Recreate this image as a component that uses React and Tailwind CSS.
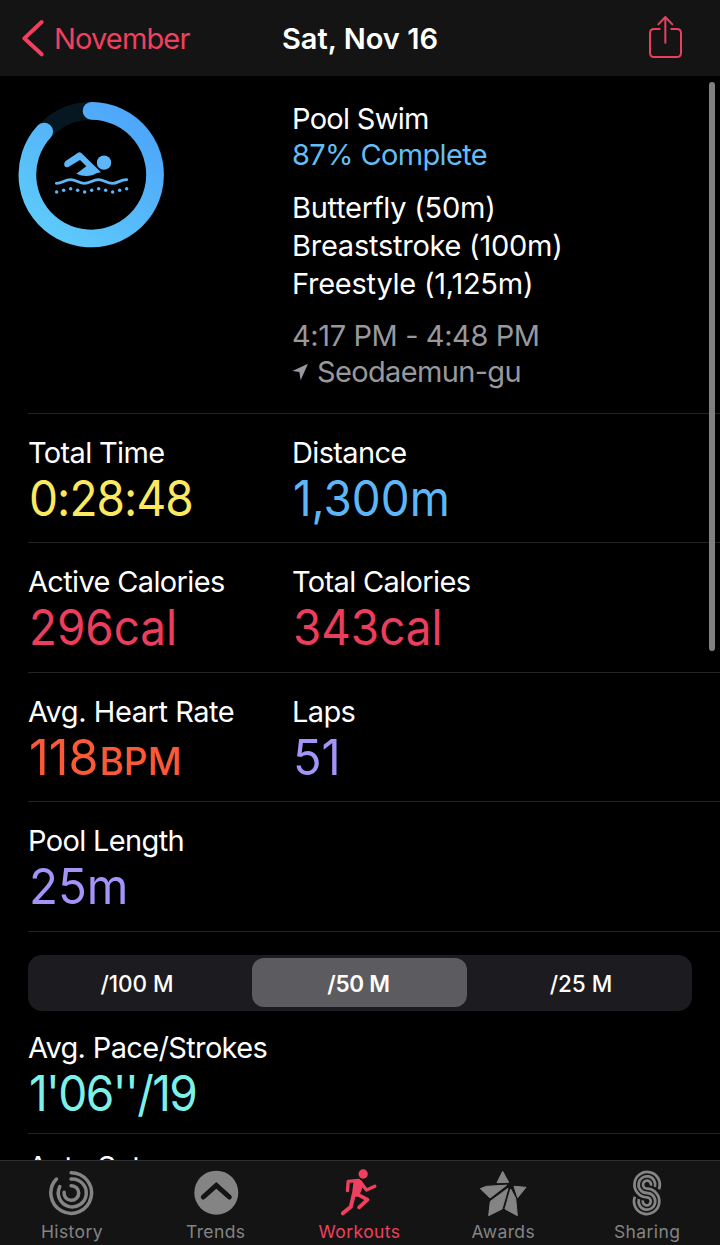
import React from "react";

function Stat({ label, value, color, labelClass = "tracking-[-0.65px]", valueClass = "scale-x-[0.935]" }) {
  return (
    <div className="whitespace-nowrap">
      <div className={`text-[29px] leading-[38px] text-white ${labelClass}`}>{label}</div>
      <div className={`w-fit origin-left pt-px pl-px text-[49px] leading-[52px] ${color} ${valueClass}`}>{value}</div>
    </div>
  );
}

function Row({ children }) {
  return (
    <div className="ml-7 grid h-[129.4px] shrink-0 grid-cols-[264px_1fr] border-b border-[#242426] pt-[20px]">
      {children}
    </div>
  );
}

function Header() {
  return (
    <header className="grid h-[76px] shrink-0 grid-cols-[1fr_auto_1fr] items-center bg-[#141414] text-[29px] leading-[38px]">
      <div className="flex items-center pl-[20px] text-[#f0405f]">
        <svg className="h-[40px] w-[26px]" viewBox="60 55 78 120" fill="none" stroke="#f0405f" strokeWidth="12" strokeLinecap="round" strokeLinejoin="round">
          <path d="M125 67 L73 116 L125 164" />
        </svg>
        <span className="pt-[2px] pl-[8px] tracking-[-0.85px]">November</span>
      </div>
      <h1 className="pt-px font-semibold text-white">Sat, Nov 16</h1>
      <div className="flex justify-end pr-[37px]">
        <svg className="h-[48px] w-[36px]" viewBox="861 42 108 144" fill="none" stroke="#e8405f" strokeWidth="6" strokeLinecap="round" strokeLinejoin="round">
          <path d="M899 87 H883 Q870 87 870 100 V158 Q870 171 883 171 H950 Q963 171 963 158 V100 Q963 87 950 87 H934" />
          <path d="M916 128 V52 M895 73 L916 51 L937 73" />
        </svg>
      </div>
    </header>
  );
}

function SwimRing() {
  const dots = [577, 572, 567, 572, 577, 572, 567, 572, 577, 572, 567];
  return (
    <svg className="h-[147px] w-[147px]" viewBox="54 304 441 441" fill="none">
      <defs>
        <linearGradient id="ring" gradientUnits="userSpaceOnUse" x1="110" y1="690" x2="390" y2="340">
          <stop offset="0" stopColor="#5ecbfa" />
          <stop offset="1" stopColor="#4ea6fa" />
        </linearGradient>
      </defs>
      <circle cx="274.5" cy="525" r="191.5" stroke="#071722" strokeWidth="53" />
      <path d="M274.5 333.5 A191.5 191.5 0 1 1 132.5 395.5" stroke="url(#ring)" strokeWidth="53" strokeLinecap="round" />
      <g fill="#5db6f7">
        <path d="M234 459 Q239 456 244 460 L303 518 Q291 519 279 526 Q253 534 229 522 L259 500 L240 481 L205 502 Q198 505 193 498 Q190 490 197 484 Z" />
        <circle cx="312" cy="489" r="21.5" />
        {dots.map((y, i) => (
          <circle key={i} cx={170 + i * 21} cy={y} r="5.2" />
        ))}
      </g>
      <path d="M169 551 C188 551 193 540 211 540 S236 551 253 551 S278 540 295 540 S320 551 337 551 S360 540 380 540" stroke="#5db6f7" strokeWidth="8.5" strokeLinecap="round" />
    </svg>
  );
}

function Tab({ label, viewBox, active, children }) {
  return (
    <div className={`flex flex-col items-center ${active ? "text-[#f0405f]" : "text-[#848484]"}`}>
      <svg className="h-[48px] w-[48px]" viewBox={viewBox} fill="none">
        {children}
      </svg>
      <span className="mt-[3px] text-[17.5px] leading-[24px] tracking-[0.4px]">{label}</span>
    </div>
  );
}

function TabBar() {
  return (
    <nav className="grid h-[85px] shrink-0 grid-cols-5 border-t border-[#2f2f2f] bg-[#141414] pr-px pt-[8px]">
      <Tab label="History" viewBox="143.7 117 144 144">
        <g stroke="#848484" strokeWidth="10.5" strokeLinecap="round">
          <path d="M213 128 A61 61 0 1 1 169 147" />
          <path d="M213 147 A42 42 0 1 1 179 170" />
          <path d="M213 167 A22 22 0 1 1 192 187" />
        </g>
      </Tab>
      <Tab label="Trends" viewBox="575.1 117 144 144">
        <circle cx="648" cy="188" r="66" fill="#848484" />
        <path d="M609 201 L648 166 L687 201" stroke="#141414" strokeWidth="15" strokeLinecap="round" />
      </Tab>
      <Tab label="Workouts" viewBox="226.5 117 144 144" active>
        <circle cx="311" cy="132" r="14" fill="#f0405f" />
        <g stroke="#f0405f" strokeLinecap="round" strokeLinejoin="round">
          <path d="M264 182 L266 154 L298 151" strokeWidth="10" />
          <path d="M302 155 L321 180 L346 169" strokeWidth="10" />
          <path d="M288 190 L324 209 L299 232" strokeWidth="11.5" />
          <path d="M283 192 L274 230 L250 250" strokeWidth="12" />
          <path d="M285 152 L303 153 L310 163 L297 196 L279 200 Z" strokeWidth="5" fill="#f0405f" />
        </g>
      </Tab>
      <Tab label="Awards" viewBox="58 117 144 144">
        <g fill="#848484" stroke="#848484" strokeWidth="3" strokeLinejoin="round">
          <path d="M129 124 L147 157 L112 158 Z" />
          <path d="M62 176 L80 169 L141 165.5 L91 204 Z" />
          <path d="M145 175 L127 237 L87 257 L92 214 Z" />
          <path d="M163 169 L199 172 L174 203 Z" />
          <path d="M153 177 L168 205 L173 257 L136 237 Z" />
        </g>
      </Tab>
      <Tab label="Sharing" viewBox="489.3 117 144 144">
        <g stroke="#848484" strokeWidth="8.3">
          <path d="M597 178 A38 38 0 1 0 561 202 A12 12 0 1 1 549 211" />
          <path d="M585 171 A25 25 0 1 0 561 189 A25 25 0 1 1 537 207" />
          <path d="M573 167 A12 12 0 1 0 561 176 A38 38 0 1 1 525 200" />
        </g>
      </Tab>
    </nav>
  );
}

export default function App() {
  return (
    <div className="relative flex h-[1245px] w-[720px] flex-col overflow-hidden bg-black font-[Inter,sans-serif]">
      <Header />
      <main className="flex min-h-0 flex-1 flex-col overflow-hidden">
        <section className="grid h-[337px] shrink-0 grid-cols-[274px_1fr] pl-[18px] pt-[25px]">
          <SwimRing />
          <div className="whitespace-nowrap text-[29px] text-white">
            <div className="leading-[36px] tracking-[-0.7px]">Pool Swim</div>
            <div className="leading-[36px] tracking-[-0.65px] text-[#64bdf5]">87% Complete</div>
            <div className="mt-[15.5px] leading-[38.3px] tracking-[-0.25px]">
              <div>Butterfly (50m)</div>
              <div>Breaststroke (100m)</div>
              <div>Freestyle (1,125m)</div>
            </div>
            <div className="mt-[15px] leading-[36px] tracking-[-0.4px] text-[#98989e]">4:17 PM - 4:48 PM</div>
            <div className="flex items-center leading-[36px] tracking-[-0.65px] text-[#98989e]">
              <svg className="h-[18px] w-[18px]" viewBox="38 552 54 54" fill="#98989e">
                <path d="M86 554 L39 576 L60 579 L64 604 Z" />
              </svg>
              <span className="pl-[7px]">Seodaemun-gu</span>
            </div>
          </div>
        </section>
        <div className="ml-7 h-px shrink-0 bg-[#242426]" />
        <Row>
          <Stat label="Total Time" value="0:28:48" color="text-[#fbe960]" valueClass="scale-x-[0.94] tracking-[-1px]" />
          <Stat label="Distance" value="1,300m" color="text-[#5db6f7]" />
        </Row>
        <Row>
          <Stat label="Active Calories" value="296cal" color="text-[#ec3e5c]" />
          <Stat label="Total Calories" value="343cal" color="text-[#ec3e5c]" />
        </Row>
        <Row>
          <Stat label="Avg. Heart Rate" value={<>118<span className="pl-px text-[37.5px] font-medium">BPM</span></>} color="text-[#fb5a38]" labelClass="tracking-[-0.45px]" valueClass="scale-x-[0.99]" />
          <Stat label="Laps" value="51" color="text-[#a394fa]" valueClass="scale-x-[0.96]" />
        </Row>
        <Row>
          <Stat label="Pool Length" value="25m" color="text-[#a394fa]" valueClass="scale-x-[0.97]" />
        </Row>
        <div className="mx-7 mt-[23px] grid h-[56px] shrink-0 grid-cols-[221px_221px_1fr] items-center rounded-[14px] bg-[#1c1c20] text-center text-[22.5px] font-medium text-white">
          <div className="pt-[2px] pr-[3px]">/100 M</div>
          <div className="mx-[3px] flex h-[49px] items-center justify-center rounded-[12px] bg-[#5b5b60] pt-[2px] pr-[2px] font-semibold tracking-[-0.3px]">/50 M</div>
          <div className="pt-[2px]">/25 M</div>
        </div>
        <div className="ml-7 h-[123px] shrink-0 border-b border-[#242426] pt-[18px]">
          <Stat label="Avg. Pace/Strokes" value="1'06''/19" color="text-[#7df0e9]" valueClass="scale-x-[0.94] tracking-[-1.7px]" />
        </div>
        <div className="ml-[28px] pt-[14px] text-[29px] leading-[38px] tracking-[-0.5px] text-white">Auto Sets</div>
      </main>
      <TabBar />
      <div className="absolute left-[709px] top-[82px] h-[569px] w-[6px] rounded-full bg-[#808080]" />
    </div>
  );
}
